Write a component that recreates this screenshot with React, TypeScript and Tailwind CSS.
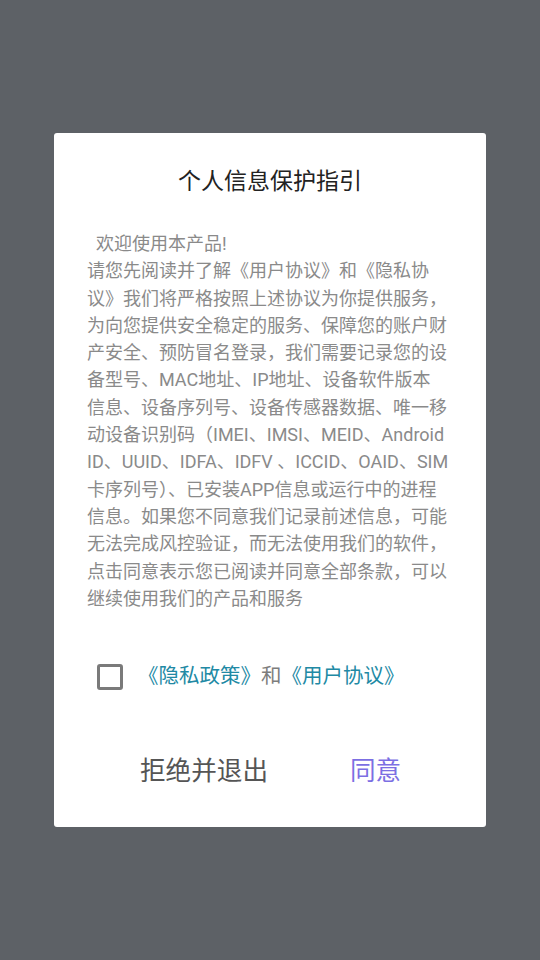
const lines = [
  '\u00a0\u00a0欢迎使用本产品!',
  '请您先阅读并了解《用户协议》和《隐私协',
  '议》我们将严格按照上述协议为你提供服务，',
  '为向您提供安全稳定的服务、保障您的账户财',
  '产安全、预防冒名登录，我们需要记录您的设',
  '备型号、MAC地址、IP地址、设备软件版本',
  '信息、设备序列号、设备传感器数据、唯一移',
  '动设备识别码（IMEI、IMSI、MEID、Android',
  'ID、UUID、IDFA、IDFV 、ICCID、OAID、SIM',
  '卡序列号）、已安装APP信息或运行中的进程',
  '信息。如果您不同意我们记录前述信息，可能',
  '无法完成风控验证，而无法使用我们的软件，',
  '点击同意表示您已阅读并同意全部条款，可以',
  '继续使用我们的产品和服务',
];

const App = () => {
  return (
    <div
      className="w-[540px] h-[960px] bg-[#5d6166] pt-[133px] flex justify-center"
      style={{ fontFamily: 'Roboto, "Noto Sans CJK SC", sans-serif' }}
    >
      <div className="w-[432px] h-[694px] bg-white rounded-[3px] flex flex-col">
        <h1 className="pt-[33px] text-center text-[23px] leading-[31px] text-[#222]">个人信息保护指引</h1>

        <div className="mt-[33px] pl-[33px] text-[18px] leading-[27.3px] text-[#8a8a8a] whitespace-nowrap">
          {lines.map((l, i) => (
            <div key={i}>{l}</div>
          ))}
        </div>

        <div className="mt-[51px] pl-[43px] flex items-center h-[27px]">
          <div className="w-[26px] h-[26px] border-[3px] border-[#7a7a7a] rounded-[3px]" />
          <p className="ml-[15px] text-[20.5px] leading-[27px] text-[#2189a4]">
            《隐私政策》<span className="text-[#7d7d7d]">和</span>《用户协议》
          </p>
        </div>

        <div className="mt-[64px] pl-[86px] flex items-center h-[34px]">
          <button className="text-[25.6px] leading-[34px] text-[#555]">拒绝并退出</button>
          <button className="ml-[82px] text-[25.6px] leading-[34px] text-[#7c6fe3]">同意</button>
        </div>
      </div>
    </div>
  );
};

export default App;
